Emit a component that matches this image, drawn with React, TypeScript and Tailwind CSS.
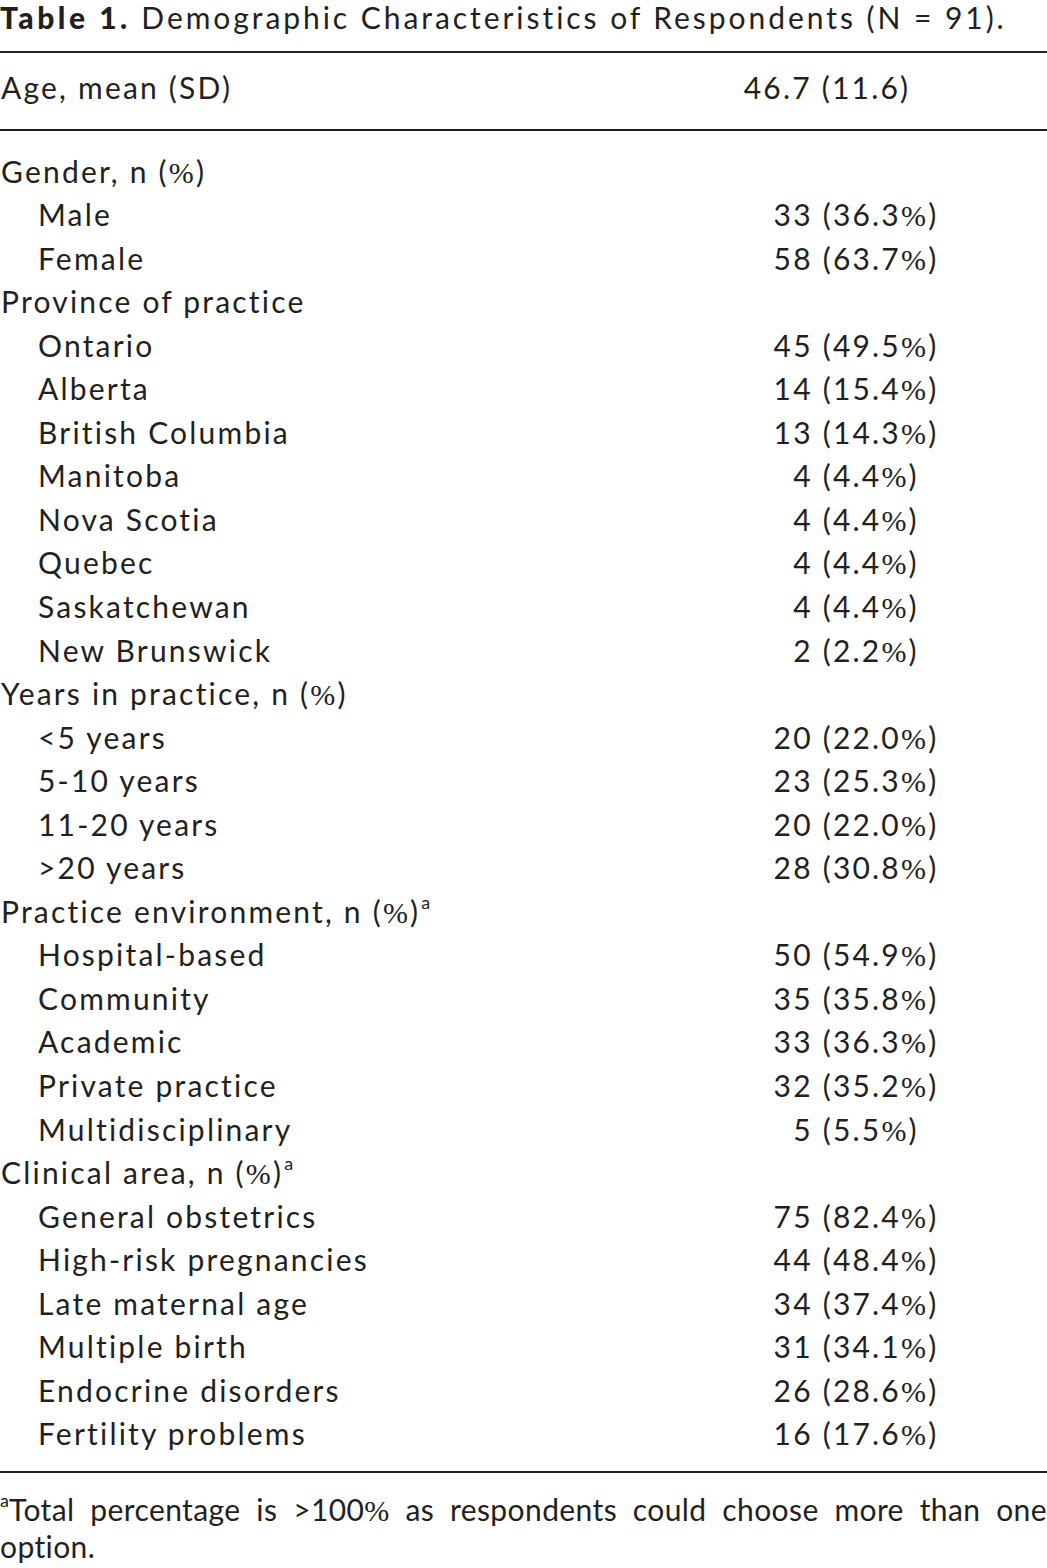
import React from "react";

type Row = { label: string; value?: string; sub?: boolean; note?: boolean };

const rows: Row[] = [
  { label: "Gender, n (%)" },
  { label: "Male", value: "33 (36.3%)", sub: true },
  { label: "Female", value: "58 (63.7%)", sub: true },
  { label: "Province of practice" },
  { label: "Ontario", value: "45 (49.5%)", sub: true },
  { label: "Alberta", value: "14 (15.4%)", sub: true },
  { label: "British Columbia", value: "13 (14.3%)", sub: true },
  { label: "Manitoba", value: "4 (4.4%)", sub: true },
  { label: "Nova Scotia", value: "4 (4.4%)", sub: true },
  { label: "Quebec", value: "4 (4.4%)", sub: true },
  { label: "Saskatchewan", value: "4 (4.4%)", sub: true },
  { label: "New Brunswick", value: "2 (2.2%)", sub: true },
  { label: "Years in practice, n (%)" },
  { label: "<5 years", value: "20 (22.0%)", sub: true },
  { label: "5-10 years", value: "23 (25.3%)", sub: true },
  { label: "11-20 years", value: "20 (22.0%)", sub: true },
  { label: ">20 years", value: "28 (30.8%)", sub: true },
  { label: "Practice environment, n (%)", note: true },
  { label: "Hospital-based", value: "50 (54.9%)", sub: true },
  { label: "Community", value: "35 (35.8%)", sub: true },
  { label: "Academic", value: "33 (36.3%)", sub: true },
  { label: "Private practice", value: "32 (35.2%)", sub: true },
  { label: "Multidisciplinary", value: "5 (5.5%)", sub: true },
  { label: "Clinical area, n (%)", note: true },
  { label: "General obstetrics", value: "75 (82.4%)", sub: true },
  { label: "High-risk pregnancies", value: "44 (48.4%)", sub: true },
  { label: "Late maternal age", value: "34 (37.4%)", sub: true },
  { label: "Multiple birth", value: "31 (34.1%)", sub: true },
  { label: "Endocrine disorders", value: "26 (28.6%)", sub: true },
  { label: "Fertility problems", value: "16 (17.6%)", sub: true },
];

// the % sign in the print is set in a thin serif
function PctSign() {
  return <span className="font-['Liberation_Serif',serif] leading-none">%</span>;
}

function Pct({ text }: { text: string }) {
  const parts = text.split("%");
  return (
    <>
      {parts.map((p, i) => (
        <React.Fragment key={i}>
          {p}
          {i < parts.length - 1 && <PctSign />}
        </React.Fragment>
      ))}
    </>
  );
}

function Sup() {
  return <sup className="text-[18px] top-[-14px] tracking-normal ml-[1px]">a</sup>;
}

export default function App() {
  return (
    <div className="w-[1047px] bg-white text-[#231f20] font-['Lato',sans-serif] text-[30px] tracking-[2.2px]">
      <div className="leading-[30px] pt-[2px] whitespace-nowrap">
        <span className="font-black tracking-[3.5px]">Table 1.</span>
        <span className="tracking-[2.95px]"> Demographic Characteristics of Respondents (N = 91).</span>
      </div>

      <div className="mt-[19px] h-[2px] bg-[#231f20]" />

      <div className="grid grid-cols-[677px_300px] leading-[43.5px] pt-[13px] pb-[19px]">
        <div className="pl-[1px]">Age, mean (SD)</div>
        <div className="text-center">46.7 (11.6)</div>
      </div>

      <div className="h-[2px] bg-[#231f20]" />

      <div className="pt-[19px] pb-[15px] leading-[43.55px]">
        {rows.map((r) => (
          <div key={r.label} className="grid grid-cols-[706px_300px] h-[43.55px]">
            <div className={r.sub ? "pl-[38px]" : "pl-[1px]"}>
              <Pct text={r.label} />
              {r.note && <Sup />}
            </div>
            <div className="text-center">{r.value && <Pct text={r.value} />}</div>
          </div>
        ))}
      </div>

      <div className="h-[2px] bg-[#231f20]" />

      <div className="pt-[18px] leading-[37px] tracking-[0.4px]">
        <div className="text-justify [text-align-last:justify]">
          <sup className="text-[18px] top-[-14px] tracking-normal">a</sup>Total percentage is &gt;100
          <PctSign /> as respondents could choose more than one
        </div>
        <div>option.</div>
      </div>
    </div>
  );
}
